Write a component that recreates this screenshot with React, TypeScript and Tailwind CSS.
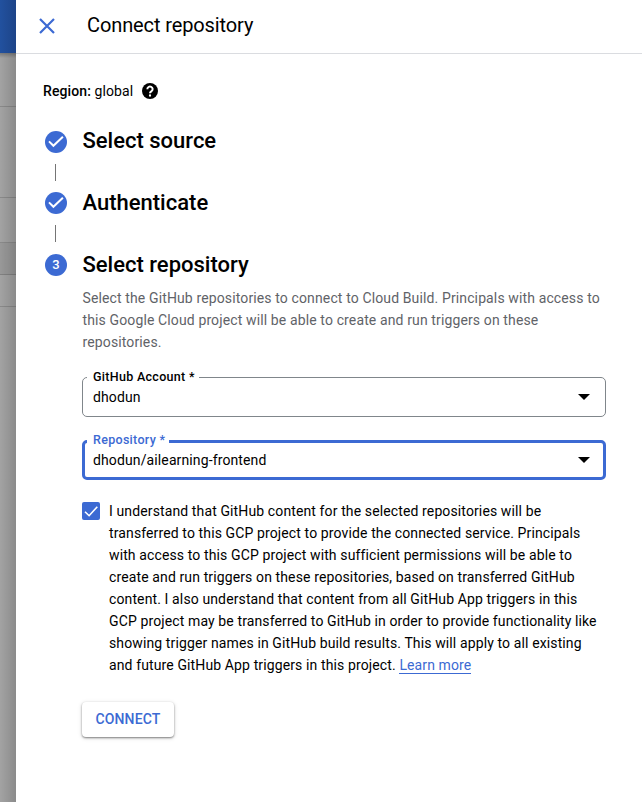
import React from "react";

function DoneStep({ title, first }: { title: string; first?: boolean }) {
  return (
    <div className={first ? "flex h-[61px] items-start" : "flex h-[62px] items-start"}>
      <div className="flex w-[22px] flex-col items-center">
        <div className="size-[22px] rounded-full bg-[#3c6ad3]">
          <svg viewBox="0 0 22 22" className="size-[22px]" fill="none" stroke="#fff" strokeWidth="2">
            <path d="M4 10.400 8.400 14.800 17.900 5.700" />
          </svg>
        </div>
        <div className="mt-[11px] mr-px h-[17px] w-px bg-[#757575]" />
      </div>
      <StepTitle raised={first}>{title}</StepTitle>
    </div>
  );
}

function StepTitle({ children, raised }: { children: React.ReactNode; raised?: boolean }) {
  return (
    <h2
      className={
        raised
          ? "-mt-[4px] ml-[15.5px] text-[22px] leading-[28px] font-medium whitespace-nowrap"
          : "-mt-[3px] ml-[15.5px] text-[22px] leading-[28px] font-medium whitespace-nowrap"
      }
    >
      {children}
    </h2>
  );
}

function Field({ label, value, active }: { label: string; value: string; active?: boolean }) {
  return (
    <fieldset
      className={
        active
          ? "h-[47px] w-[524px] rounded-[5px] border-[3px] border-[#3c6ad3] pl-[2px]"
          : "h-[47px] w-[524px] rounded-[5px] border border-[#80868b] pl-[4px]"
      }
    >
      <legend
        className={
          active
            ? "h-[17px] px-[6px] pr-[4px] text-[12.5px] leading-[14px] font-medium tracking-[0.3px] text-[#3c6ad3]"
            : "h-[14px] px-[6px] pr-[4px] text-[12.5px] leading-[14px] font-medium tracking-[0.3px]"
        }
      >
        {label}
      </legend>
      <div
        className={
          active
            ? "flex h-[20px] items-center justify-between pr-[13px] pl-[6px]"
            : "flex h-[26px] items-center justify-between pr-[15px] pl-[6px]"
        }
      >
        <span className="text-[14px] tracking-[0.12px]">{value}</span>
        <svg viewBox="0 0 12 6" className="h-[6px] w-[12px]">
          <path d="M0 0h12L6 6z" />
        </svg>
      </div>
    </fieldset>
  );
}

const description = [
  "Select the GitHub repositories to connect to Cloud Build. Principals with access to",
  "this Google Cloud project will be able to create and run triggers on these",
  "repositories.",
];

const consent = [
  "I understand that GitHub content for the selected repositories will be",
  "transferred to this GCP project to provide the connected service. Principals",
  "with access to this GCP project with sufficient permissions will be able to",
  "create and run triggers on these repositories, based on transferred GitHub",
  "content. I also understand that content from all GitHub App triggers in this",
  "GCP project may be transferred to GitHub in order to provide functionality like",
  "showing trigger names in GitHub build results. This will apply to all existing",
];

export default function App() {
  return (
    <div className="flex h-[802px] w-[642px] overflow-hidden bg-white font-[Roboto,sans-serif] text-black">
      <aside className="flex w-[16px] shrink-0 flex-col bg-linear-to-r from-[#a3a3a3] to-[#8b8b8b]">
        <div className="h-[53px] bg-linear-to-r from-[#22519f] to-[#1d4488]" />
        <div className="h-[5px] bg-linear-to-b from-black/25 to-transparent" />
        <div className="h-[49px] border-b border-black/15" />
        <div className="h-[91px] border-b border-black/15" />
        <div className="h-[45px] border-b border-black/15" />
        <div className="h-[32px] border-b border-black/15 bg-black/6" />
        <div className="h-[32px] border-b border-black/15" />
      </aside>
      <main className="flex min-w-0 flex-1 flex-col">
        <header className="flex h-[54px] shrink-0 items-center border-b border-[#dadce0] pb-[2px] pl-[23px]">
          <svg viewBox="0 0 16 16" className="size-[16px]" stroke="#3c6ad3" strokeWidth="2.2" fill="none">
            <path d="M1 1 15 15M15 1 1 15" />
          </svg>
          <h1 className="-mt-[2px] ml-[32px] text-[20px] leading-[24px] tracking-[-0.11px]">Connect repository</h1>
        </header>
        <div className="mt-[27px] ml-[27px] flex h-[20px] items-center text-[14px] tracking-[0.1px]">
          <span><span className="font-medium">Region:</span> global</span>
          <svg viewBox="2 2 20 20" className="ml-[8.5px] size-[16px]">
            <circle cx="12" cy="12" r="10" />
            <path d="M8.700 9.800a3.300 3.200 0 1 1 5.200 2.500c-1.200.9-1.900 1.300-1.900 2.500" fill="none" stroke="#fff" strokeWidth="2.500" />
            <path d="M10.700 16.300h2.600v2.600h-2.600z" fill="#fff" />
          </svg>
        </div>
        <div className="mt-[30px] ml-[29px]">
          <DoneStep title="Select source" first />
          <DoneStep title="Authenticate" />
          <div className="flex h-[33px] items-start">
            <div className="flex size-[22px] items-center justify-center rounded-full bg-[#3c6ad3] text-[13px] font-medium text-white">3</div>
            <StepTitle>Select repository</StepTitle>
          </div>
        </div>
        <div className="ml-[66px]">
          <div className="pl-[0.5px] text-[14px] leading-[22px] tracking-[0.125px] whitespace-nowrap text-[#5f6368]">
            {description.map((line) => <p key={line}>{line}</p>)}
          </div>
          <div className="mt-[17px] flex flex-col gap-[16px]">
            <Field label="GitHub Account *" value="dhodun" />
            <Field label="Repository *" value="dhodun/ailearning-frontend" active />
          </div>
          <div className="mt-[20px] flex">
            <div className="mt-[2px] size-[18px] rounded-[2px] bg-[#3c6ad3]">
              <svg viewBox="0 0 18 18" className="size-[18px]" fill="none" stroke="#fff" strokeWidth="1.6">
                <path d="M3 9.700 7.100 13.700 15.300 4.700" />
              </svg>
            </div>
            <div className="ml-[9px] text-[14px] leading-[22px] tracking-[0.12px] whitespace-nowrap">
              {consent.map((line) => <p key={line}>{line}</p>)}
              <p>and future GitHub App triggers in this project. <a className="border-b border-[#3c6ad3] text-[#3c6ad3]">Learn more</a></p>
            </div>
          </div>
          <button className="mt-[26px] flex h-[35px] w-[92px] items-center justify-center rounded-[4px] bg-white text-[14px] font-medium tracking-[0.15px] text-[#3c6ad3] shadow-[0_1px_2px_rgba(0,0,0,0.45),0_1px_5px_rgba(0,0,0,0.14)]">CONNECT</button>
        </div>
      </main>
    </div>
  );
}
